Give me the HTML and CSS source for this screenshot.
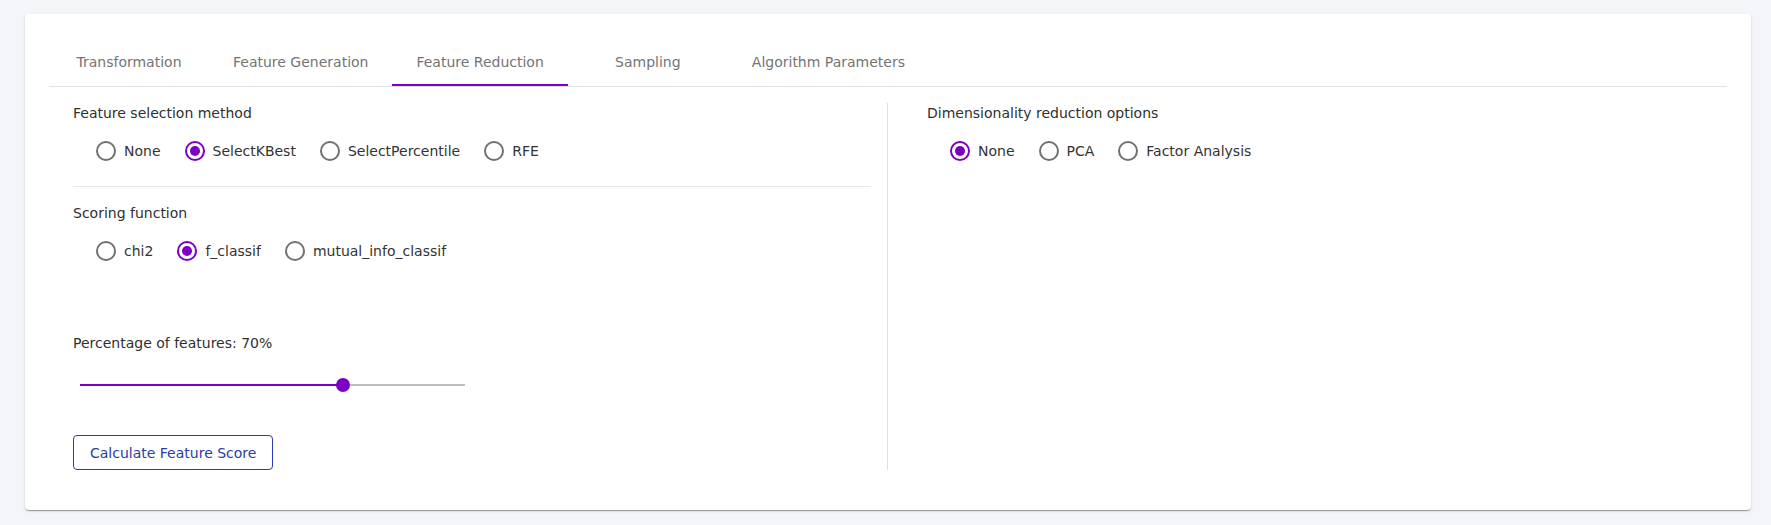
FILE: index.html
```html
<!DOCTYPE html>
<html lang="en">
<head>
<meta charset="utf-8">
<title>Feature Reduction</title>
<link rel="stylesheet" href="styles.css">
</head>
<body>
<div class="card">
  <div class="tabs">
    <div class="tab">Transformation</div>
    <div class="tab">Feature Generation</div>
    <div class="tab tab-active">Feature Reduction</div>
    <div class="tab">Sampling</div>
    <div class="tab">Algorithm Parameters</div>
  </div>
  <div class="content">
    <div class="col col-left">
      <div class="field-label">Feature selection method</div>
      <div class="radio-group">
        <div class="radio"><span class="radio-circle"></span><span class="radio-text">None</span></div>
        <div class="radio"><span class="radio-circle checked"></span><span class="radio-text">SelectKBest</span></div>
        <div class="radio"><span class="radio-circle"></span><span class="radio-text">SelectPercentile</span></div>
        <div class="radio"><span class="radio-circle"></span><span class="radio-text">RFE</span></div>
      </div>
      <div class="divider"></div>
      <div class="field-label label-scoring">Scoring function</div>
      <div class="radio-group">
        <div class="radio"><span class="radio-circle"></span><span class="radio-text">chi2</span></div>
        <div class="radio"><span class="radio-circle checked"></span><span class="radio-text">f_classif</span></div>
        <div class="radio"><span class="radio-circle"></span><span class="radio-text">mutual_info_classif</span></div>
      </div>
      <div class="field-label label-percent">Percentage of features: 70%</div>
      <div class="slider">
        <div class="slider-track">
          <div class="slider-fill" style="width:68.4%"></div>
          <div class="slider-thumb" style="left:68.4%"></div>
        </div>
      </div>
      <button class="btn-outline" type="button">Calculate Feature Score</button>
    </div>
    <div class="col col-right">
      <div class="field-label">Dimensionality reduction options</div>
      <div class="radio-group">
        <div class="radio"><span class="radio-circle checked"></span><span class="radio-text">None</span></div>
        <div class="radio"><span class="radio-circle"></span><span class="radio-text">PCA</span></div>
        <div class="radio"><span class="radio-circle"></span><span class="radio-text">Factor Analysis</span></div>
      </div>
    </div>
  </div>
</div>
</body>
</html>
```
FILE: styles.css
```css
* { box-sizing: border-box; }

body {
  margin: 0;
  padding: 14px 20px 15px 25px;
  background: #f4f5f9;
  font-family: "DejaVu Sans", "Noto Sans", sans-serif;
  font-size: 14px;
  color: #2f2f2f;
}

.card {
  background: #ffffff;
  border-radius: 4px;
  box-shadow: 0 2px 1px -1px rgba(0, 0, 0, 0.2), 0 1px 1px 0 rgba(0, 0, 0, 0.14), 0 1px 3px 0 rgba(0, 0, 0, 0.12);
  padding: 24px 24px 40px;
}

.tabs {
  display: flex;
  border-bottom: 1px solid #e0e0e0;
}

.tab {
  position: relative;
  min-width: 160px;
  height: 48px;
  padding: 0 24px;
  display: flex;
  align-items: center;
  justify-content: center;
  color: #747474;
  white-space: nowrap;
}

.tab-active::after {
  content: "";
  position: absolute;
  left: 0;
  right: 0;
  bottom: 0;
  height: 2px;
  background: #7b00c2;
}

.content {
  display: flex;
  padding-top: 16px;
}

.col-left {
  flex: 0 0 838px;
  padding: 0 16px 0 24px;
}

.col-right {
  flex: 1 1 0;
  border-left: 1px solid #e0e0e0;
  padding-left: 39px;
}

.field-label {
  line-height: 20px;
  color: #2f2f2f;
}

.label-scoring {
  margin-top: 16px;
}

.label-percent {
  margin-top: 62px;
}

.radio-group {
  display: flex;
  align-items: center;
  height: 40px;
  margin-top: 8px;
  padding-left: 23px;
  gap: 24px;
}

.radio {
  display: flex;
  align-items: center;
  gap: 8px;
}

.radio-text {
  color: #333333;
  white-space: nowrap;
}

.radio-circle {
  width: 20px;
  height: 20px;
  border: 2px solid #717171;
  border-radius: 50%;
  display: flex;
  align-items: center;
  justify-content: center;
  flex: none;
}

.radio-circle.checked {
  border-color: #7b00c2;
}

.radio-circle.checked::before {
  content: "";
  width: 10px;
  height: 10px;
  border-radius: 50%;
  background: #7b00c2;
}

.divider {
  margin-top: 15px;
  height: 1px;
  background: #e4e9ee;
}

.slider {
  margin: 18px 0 0 7px;
  width: 385px;
  height: 28px;
  display: flex;
  align-items: center;
}

.slider-track {
  position: relative;
  width: 100%;
  height: 2px;
  background: #bdbdbd;
}

.slider-fill {
  height: 100%;
  background: #7b00c2;
}

.slider-thumb {
  position: absolute;
  top: 50%;
  width: 14px;
  height: 14px;
  border-radius: 50%;
  background: #7b00c2;
  transform: translate(-50%, -50%);
}

.btn-outline {
  display: block;
  margin-top: 36px;
  height: 35px;
  padding: 0 16px;
  border: 1px solid #2a3bb0;
  border-radius: 4px;
  background: #ffffff;
  color: #2b3aa8;
  font-family: inherit;
  font-size: 14px;
  cursor: pointer;
}
```
